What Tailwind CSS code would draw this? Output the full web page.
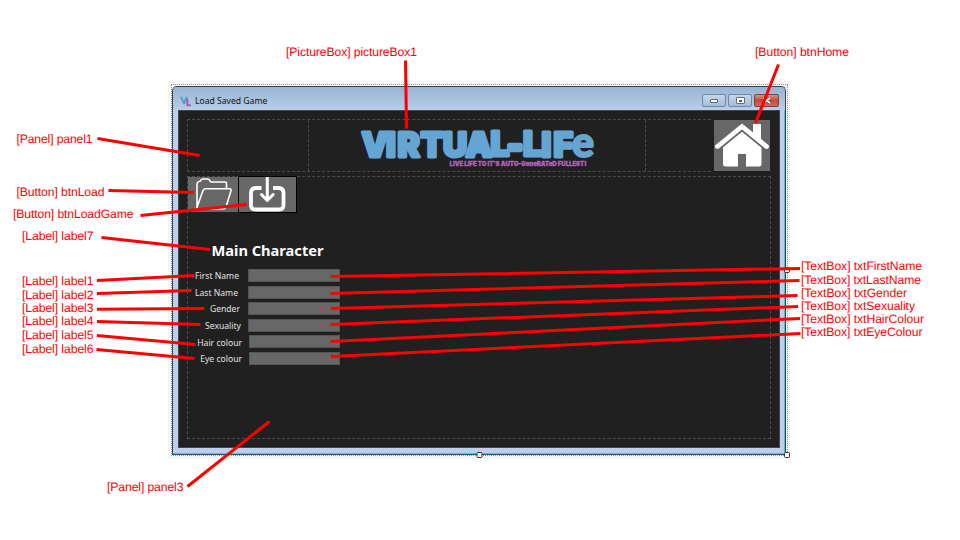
<!DOCTYPE html>
<html lang="en">
<head>
<meta charset="utf-8">
<title>Load Saved Game</title>
<script src="https://cdn.jsdelivr.net/npm/@tailwindcss/browser@4"></script>
</head>
<body class="bg-white">
<main class="relative h-[540px] w-[960px] overflow-hidden bg-white">
  <!-- designer surface with the form -->
  <section class="absolute left-[168px] top-[81px] h-[378px] w-[622px] bg-[#f5f5f5] p-[3px] font-['Noto_Sans',sans-serif]">
    <div class="h-[372px] w-[617px] border border-dotted border-[#999] pt-px">
      <div class="flex h-[369px] w-[614px] flex-col rounded-t-[5px] border border-[#344450] border-b-[#24606d] bg-[#b9d1ea] shadow-[inset_-1px_-1px_0_#3fc8df]">
        <header class="flex h-[23px] shrink-0 items-center rounded-t-[4px] bg-linear-to-b from-[#98b4d2] to-[#b7cfe8] pl-[7px] pr-[6px]">
          <svg class="mt-[5px] h-[12px] w-[13px] shrink-0 overflow-visible" viewBox="0 0 13 12" font-family="Lato" font-weight="900">
            <text x="0.500" y="8.500" font-size="9.500" fill="#4d9fd0" stroke="#4d9fd0" stroke-width=".5">V</text><text x="6" y="11" font-size="9" fill="#b256ae" stroke="#b256ae" stroke-width=".5">L</text>
          </svg>
          <h1 class="ml-[2px] mt-[5px] text-[8.6px] leading-3 text-[#111]">Load Saved Game</h1>
          <div class="ml-auto mt-[4px] flex gap-[2px]">
            <span class="flex h-[13px] w-[24px] items-center justify-center rounded-[2px] border border-[#7088a2] bg-linear-to-b from-[#c5d7e9] to-[#a5bdd7]"><i class="mt-px h-[4px] w-[8px] rounded-[1px] border border-[#666c76] bg-white"></i></span>
            <span class="flex h-[13px] w-[24px] items-center justify-center rounded-[2px] border border-[#7088a2] bg-linear-to-b from-[#c5d7e9] to-[#a5bdd7]"><i class="flex h-[7px] w-[9px] items-center justify-center rounded-[1px] border border-[#666c76] bg-white"><b class="h-[2px] w-[3px] bg-[#59616d]"></b></i></span>
            <span class="flex h-[13px] w-[25px] items-center justify-center rounded-[2px] border border-[#853f39] bg-linear-to-b from-[#d99083] via-[#bd4b38] to-[#cc6c58]"><svg class="h-[7px] w-[9px]" viewBox="0 0 9 7"><path d="M1 1l7 5M8 1L1 6" stroke="#664448" stroke-width="3"/><path d="M1 1l7 5M8 1L1 6" stroke="#fff" stroke-width="1.7"/></svg></span>
          </div>
        </header>
        <div class="ml-[5px] flex h-[338px] w-[602px] flex-col gap-[4px] border border-[#43484e] bg-[#202020] pl-[8px] pt-[8px]">
          <div class="flex h-[53px] w-[584px] shrink-0 border border-dashed border-[#4c4c4c]">
            <div class="w-[120px]"></div>
            <div class="w-[338px] border-x border-dashed border-[#4c4c4c]">
              <svg class="h-[51px] w-[336px]" viewBox="309 120 336 51">
                <text y="156.800 156.800 156.800 156.800 156.800 156.800 155.500 156.800 155.800 156.800 156.800 156.800" x="361.500 386 397.500 420.500 443 465.500 490.500 507 523 541.500 553.500 572" font-family="Inter,Lato,sans-serif" font-size="33.500" font-weight="900" fill="#65a5d4" stroke="#65a5d4" stroke-width="3" stroke-linejoin="round">VIRTUAL<tspan stroke-width="4.400">-</tspan>LIF<tspan font-family="Lato,sans-serif" font-size="41" stroke-width="2">e</tspan></text>
                <text x="449.500" y="165.900" textLength="137" lengthAdjust="spacingAndGlyphs" font-family="Inter,sans-serif" font-size="6" font-weight="900" fill="#ae64b4" stroke="#ae64b4" stroke-width=".3">LIVE LIFE TO IT'S AUTO-GeneRATeD FULLEST!</text>
              </svg>
            </div>
            <button class="-mt-px -mr-px ml-auto h-[53px] w-[58px] shrink-0 border border-[#202020] bg-[#676767]">
              <svg class="h-[51px] w-[56px]" viewBox="714 120 56 51">
                <path d="M753 134V125q0-1 1-1h6q1 0 1 1v16z" fill="#fff"/>
                <path d="M742 129L761.500 146.500V164q0 2.500-2.500 2.500H746V154h-8v12.500H725.500q-2.500 0-2.500-2.500V147z" fill="#fff"/>
                <path d="M717 149L742 128.500L767 149" fill="none" stroke="#676767" stroke-width="5"/>
                <path d="M717.500 146.500L742 126.500L766.500 146.500" fill="none" stroke="#fff" stroke-width="4.800" stroke-linecap="round"/>
              </svg>
            </button>
          </div>
          <div class="h-[263px] w-[584px] shrink-0 border border-dashed border-[#4c4c4c]">
            <div class="-mt-px flex h-[37px]">
              <button class="mt-px h-[35px] w-[50px] bg-[#676767]">
                <svg class="h-[35px] w-[50px]" viewBox="188 177 50 35" fill="none" stroke="#fff" stroke-width="1.600" stroke-linejoin="round">
                  <path d="M197 208.500V184q0-2 2-2.500l1.500-.5q.5-2 2.500-2h4.500q2 0 2.500 2l1 1H225q1.500 0 1.500 1.500V188M196.500 208.500l6.500-18q.8-1.800 2.500-1.800h24q2 0 1.500 2L226 207q-.7 2-3 2H197z"/>
                </svg>
              </button>
              <button class="h-[37px] w-[59px] border border-black bg-[#676767]">
                <svg class="h-[35px] w-[57px]" viewBox="239 177 57 35" fill="none" stroke="#fff" stroke-linecap="round" stroke-linejoin="round">
                  <path d="M261.500 188h-5.500q-5 0-5 5v12.500q0 4 5 4h22.500q5 0 5-4V193q0-5-5-5h-5.500" stroke-width="3.800" stroke-linecap="butt"/>
                  <path d="M267.300 178v21.500M261.500 194.500l5.800 6 5.800-6" stroke-width="3"/>
                </svg>
              </button>
            </div>
            <h2 class="ml-[23px] mt-[27px] h-[20px] whitespace-nowrap text-[14.7px] font-bold leading-[20px] text-white"><svg class="h-[20px] w-[116px] overflow-visible" viewBox="0 0 116 20"><text x="0.500" y="15.500" textLength="112" lengthAdjust="spacingAndGlyphs" fill="#fff">Main Character</text></svg></h2>
            <form class="mt-[9px] flex flex-col gap-[3.500px] text-[8.600px] leading-[13px] text-[#e2e2e2]">
              <div class="flex h-[13px]"><label class="w-[51px] pt-px text-right">First Name</label><span class="ml-[9px] w-[92px] border border-[#555] bg-[#676767]"></span></div>
              <div class="flex h-[13px]"><label class="w-[50px] pt-px text-right">Last Name</label><span class="ml-[10px] w-[92px] border border-[#555] bg-[#676767]"></span></div>
              <div class="flex h-[13px]"><label class="w-[52px] pt-px text-right">Gender</label><span class="ml-[8px] w-[92px] border border-[#555] bg-[#676767]"></span></div>
              <div class="flex h-[13px]"><label class="w-[53px] pt-px text-right">Sexuality</label><span class="ml-[7px] w-[92px] border border-[#555] bg-[#676767]"></span></div>
              <div class="flex h-[13px]"><label class="w-[54px] pt-[2px] text-right">Hair colour</label><span class="ml-[7px] w-[91px] border border-[#555] bg-[#676767]"></span></div>
              <div class="flex h-[13px]"><label class="w-[54px] pt-px text-right">Eye colour</label><span class="ml-[7px] w-[91px] border border-[#555] bg-[#676767]"></span></div>
            </form>
          </div>
        </div>
      </div>
    </div>
  </section>

  <!-- resize handles, leader lines and callouts -->
  <svg class="absolute left-0 top-0 h-[540px] w-[960px]" viewBox="0 0 960 540">
    <g fill="#fff" stroke="#333" stroke-width="1"><rect x="784.500" y="267.500" width="5" height="5" rx="1"/><rect x="477" y="452.500" width="5" height="5" rx="1"/><rect x="784.500" y="452.500" width="5" height="5" rx="1"/></g>
    <path fill="none" stroke="#f00" stroke-width="3" d="M405.500 60.500L406.500 128.500M778.500 64.500L755.500 123M97.500 138.500L199.500 155.500M108.500 190.500L193.500 192.500M140.500 215.500L246.500 204.500M101.500 237.500L210 249.500M97 280.500L194.500 275.500M97 293.500L191.500 290.500M97 309.300L204.500 308.500M97 321.500L200.500 324.500M97 335.500L195.500 344.500M96.500 349.500L194.500 358.500M187.500 486.500L269.500 421.500M330.500 276.500L800 268.500M330.500 293.500L799.500 280.500M331 308.500L797.500 295.500M330.500 324.500L798 306.500M330.500 341.500L800 318.500M331 356.500L800.500 333.500"/>
    <g fill="#f00" font-family="Liberation Sans, Arial, sans-serif" font-size="12.200" text-rendering="geometricPrecision">
      <text x="286" y="56" textLength="131">[PictureBox] pictureBox1</text>
      <text x="755" y="56" textLength="94">[Button] btnHome</text>
      <text x="16.500" y="143.400" textLength="76">[Panel] panel1</text>
      <text x="16.500" y="196" textLength="88">[Button] btnLoad</text>
      <text x="13" y="218.400" textLength="120.500">[Button] btnLoadGame</text>
      <text x="22" y="240.400" textLength="71.500">[Label] label7</text>
      <text x="22" y="285" textLength="71.500">[Label] label1</text>
      <text x="22" y="299" textLength="71.500">[Label] label2</text>
      <text x="22" y="312" textLength="71.500">[Label] label3</text>
      <text x="22" y="325.400" textLength="71.500">[Label] label4</text>
      <text x="22" y="339" textLength="71.500">[Label] label5</text>
      <text x="22" y="352.600" textLength="71.500">[Label] label6</text>
      <text x="107" y="491.400" textLength="76.500">[Panel] panel3</text>
      <text x="801" y="270.400" textLength="121">[TextBox] txtFirstName</text>
      <text x="801" y="284" textLength="120">[TextBox] txtLastName</text>
      <text x="801" y="297" textLength="106">[TextBox] txtGender</text>
      <text x="801" y="309.600" textLength="114">[TextBox] txtSexuality</text>
      <text x="801" y="323" textLength="123">[TextBox] txtHairColour</text>
      <text x="801" y="336" textLength="121.500">[TextBox] txtEyeColour</text>
    </g>
  </svg>
</main>
</body>
</html>
